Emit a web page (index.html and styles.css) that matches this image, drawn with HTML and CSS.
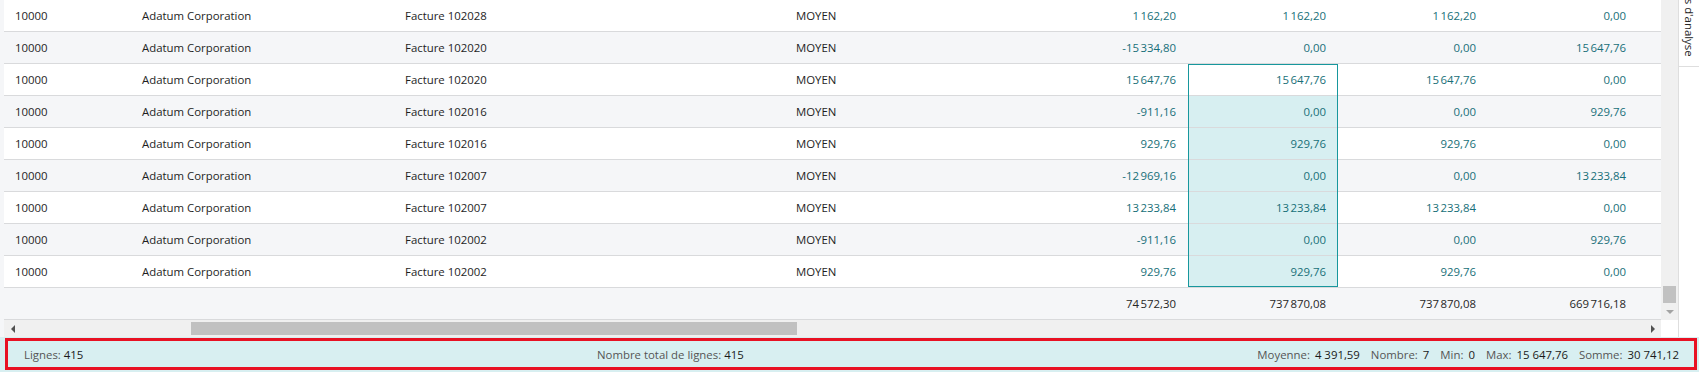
FILE: index.html
```html
<!DOCTYPE html>
<html lang="fr">
<head>
<meta charset="utf-8">
<title>Analyse</title>
<link rel="stylesheet" href="styles.css">
</head>
<body>
<div class="app">
  <div class="main">
    <div class="grid-area">
      <div class="grid-body">
        <div class="table">
          <div class="row">
            <div class="cell">10000</div><div class="cell">Adatum Corporation</div><div class="cell">Facture 102028</div><div class="cell">MOYEN</div>
            <div class="cell num">1&#8239;162,20</div><div class="cell num">1&#8239;162,20</div><div class="cell num">1&#8239;162,20</div><div class="cell num">0,00</div><div class="cell"></div>
          </div>
          <div class="row alt">
            <div class="cell">10000</div><div class="cell">Adatum Corporation</div><div class="cell">Facture 102020</div><div class="cell">MOYEN</div>
            <div class="cell num">-15&#8239;334,80</div><div class="cell num">0,00</div><div class="cell num">0,00</div><div class="cell num">15&#8239;647,76</div><div class="cell"></div>
          </div>
          <div class="row">
            <div class="cell">10000</div><div class="cell">Adatum Corporation</div><div class="cell">Facture 102020</div><div class="cell">MOYEN</div>
            <div class="cell num">15&#8239;647,76</div><div class="cell num sel sel-first focus">15&#8239;647,76</div><div class="cell num">15&#8239;647,76</div><div class="cell num">0,00</div><div class="cell"></div>
          </div>
          <div class="row alt">
            <div class="cell">10000</div><div class="cell">Adatum Corporation</div><div class="cell">Facture 102016</div><div class="cell">MOYEN</div>
            <div class="cell num">-911,16</div><div class="cell num sel">0,00</div><div class="cell num">0,00</div><div class="cell num">929,76</div><div class="cell"></div>
          </div>
          <div class="row">
            <div class="cell">10000</div><div class="cell">Adatum Corporation</div><div class="cell">Facture 102016</div><div class="cell">MOYEN</div>
            <div class="cell num">929,76</div><div class="cell num sel">929,76</div><div class="cell num">929,76</div><div class="cell num">0,00</div><div class="cell"></div>
          </div>
          <div class="row alt">
            <div class="cell">10000</div><div class="cell">Adatum Corporation</div><div class="cell">Facture 102007</div><div class="cell">MOYEN</div>
            <div class="cell num">-12&#8239;969,16</div><div class="cell num sel">0,00</div><div class="cell num">0,00</div><div class="cell num">13&#8239;233,84</div><div class="cell"></div>
          </div>
          <div class="row">
            <div class="cell">10000</div><div class="cell">Adatum Corporation</div><div class="cell">Facture 102007</div><div class="cell">MOYEN</div>
            <div class="cell num">13&#8239;233,84</div><div class="cell num sel">13&#8239;233,84</div><div class="cell num">13&#8239;233,84</div><div class="cell num">0,00</div><div class="cell"></div>
          </div>
          <div class="row alt">
            <div class="cell">10000</div><div class="cell">Adatum Corporation</div><div class="cell">Facture 102002</div><div class="cell">MOYEN</div>
            <div class="cell num">-911,16</div><div class="cell num sel">0,00</div><div class="cell num">0,00</div><div class="cell num">929,76</div><div class="cell"></div>
          </div>
          <div class="row">
            <div class="cell">10000</div><div class="cell">Adatum Corporation</div><div class="cell">Facture 102002</div><div class="cell">MOYEN</div>
            <div class="cell num">929,76</div><div class="cell num sel sel-last">929,76</div><div class="cell num">929,76</div><div class="cell num">0,00</div><div class="cell"></div>
          </div>
          <div class="row alt total">
            <div class="cell"></div><div class="cell"></div><div class="cell"></div><div class="cell"></div>
            <div class="cell num">74&#8239;572,30</div><div class="cell num">737&#8239;870,08</div><div class="cell num">737&#8239;870,08</div><div class="cell num">669&#8239;716,18</div><div class="cell"></div>
          </div>
        </div>
        <div class="vscroll">
          <div class="vthumb"></div>
          <div class="varrow"><span class="tri-down"></span></div>
        </div>
      </div>
      <div class="hbar">
        <div class="hscroll">
          <div class="harrow"><span class="tri-left"></span></div>
          <div class="htrack"><div class="hthumb"></div></div>
          <div class="harrow"><span class="tri-right"></span></div>
        </div>
        <div class="corner"></div>
      </div>
    </div>
    <div class="side">
      <div class="side-tab"><span class="side-label">Filtres d'analyse</span></div>
    </div>
  </div>
  <div class="status">
    <div class="st-item"><span class="lbl">Lignes:</span> <span class="val">415</span></div>
    <div class="st-item"><span class="lbl">Nombre total de lignes:</span> <span class="val">415</span></div>
    <div class="st-stats">
      <span class="lbl">Moyenne:</span><span class="val">4 391,59</span>
      <span class="lbl">Nombre:</span><span class="val">7</span>
      <span class="lbl">Min:</span><span class="val">0</span>
      <span class="lbl">Max:</span><span class="val">15 647,76</span>
      <span class="lbl">Somme:</span><span class="val">30 741,12</span>
    </div>
    <div class="highlight"></div>
  </div>
</div>
</body>
</html>
```

FILE: styles.css
```css
html, body {
  margin: 0;
  padding: 0;
}
body {
  width: 1699px;
  height: 372px;
  overflow: hidden;
  background: #f5f6f8;
  font-family: "Open Sans", "Segoe UI", "Noto Sans", sans-serif;
  font-size: 11.4px;
  color: #1e1e1e;
}
.app {
  display: flex;
  flex-direction: column;
  height: 372px;
}
.main {
  display: flex;
  height: 337px;
}
.grid-area {
  flex: 1;
  display: flex;
  flex-direction: column;
  padding-left: 4px;
}
.grid-body {
  display: flex;
  height: 320px;
}
.table {
  flex: 1;
  background: #fff;
}
.row {
  display: grid;
  grid-template-columns: 127px 263px 391px 253px 150px 150px 150px 150px 1fr;
  height: 32px;
  box-sizing: border-box;
  border-bottom: 1px solid #d9dadc;
  background: #fff;
}
.row.alt {
  background: #f5f6f8;
}
.cell {
  display: flex;
  align-items: center;
  padding-left: 11px;
  white-space: nowrap;
  position: relative;
}
.cell.num {
  justify-content: flex-end;
  padding: 0 12px 0 0;
  color: #176f78;
}
.total .cell.num {
  color: #262626;
}
.cell.sel {
  background: #d7eff1;
}
.cell.sel.focus {
  background: #fff;
}
.cell.sel::after {
  content: "";
  position: absolute;
  left: 0;
  right: 0;
  top: 0;
  bottom: -1px;
  border-left: 1px solid #17979d;
  border-right: 1px solid #17979d;
  pointer-events: none;
}
.cell.sel-first::after {
  border-top: 1px solid #17979d;
}
.cell.sel-last::after {
  bottom: 0;
  border-bottom: 1px solid #17979d;
}
.vscroll {
  width: 17px;
  background: #f0f0f0;
  display: flex;
  flex-direction: column;
  justify-content: flex-end;
  align-items: center;
}
.vthumb {
  width: 13px;
  height: 17px;
  background: #c1c1c1;
}
.varrow {
  height: 17px;
  width: 17px;
  display: flex;
  align-items: center;
  justify-content: center;
}
.tri-down {
  width: 0;
  height: 0;
  border-left: 4px solid transparent;
  border-right: 4px solid transparent;
  border-top: 4px solid #a3a3a3;
}
.hbar {
  display: flex;
  height: 17px;
}
.hscroll {
  flex: 1;
  display: flex;
  background: #f0f0f0;
}
.harrow {
  width: 17px;
  display: flex;
  align-items: center;
  justify-content: center;
}
.tri-left {
  width: 0;
  height: 0;
  border-top: 4px solid transparent;
  border-bottom: 4px solid transparent;
  border-right: 4px solid #505050;
}
.tri-right {
  width: 0;
  height: 0;
  border-top: 4px solid transparent;
  border-bottom: 4px solid transparent;
  border-left: 4px solid #505050;
}
.htrack {
  flex: 1;
  display: flex;
  align-items: center;
  padding-left: 170px;
}
.hthumb {
  width: 606px;
  height: 13px;
  background: #c1c1c1;
}
.corner {
  width: 17px;
  background: #fff;
}
.side {
  width: 20px;
  border-left: 1px solid #dedede;
  background: #fff;
}
.side-tab {
  height: 67px;
  box-sizing: border-box;
  border-bottom: 1px solid #dedede;
  display: flex;
  flex-direction: column;
  justify-content: flex-end;
  align-items: center;
  padding-bottom: 9px;
  overflow: hidden;
}
.side-label {
  writing-mode: vertical-rl;
  flex-shrink: 0;
  white-space: nowrap;
  font-size: 11.4px;
  color: #262626;
  line-height: 14px;
}
.status {
  position: relative;
  height: 35px;
  box-sizing: border-box;
  background: #d8eff1;
  display: grid;
  grid-template-columns: 573px 1fr auto;
  align-items: center;
  padding: 0 20px 0 24px;
}
.lbl {
  color: #555;
}
.val {
  color: #1a1a1a;
}
.st-stats .lbl {
  margin-left: 8px;
  margin-right: 5px;
}
.st-stats .lbl:first-child {
  margin-left: 0;
}
.highlight {
  position: absolute;
  left: 5px;
  top: 1px;
  width: 1692px;
  height: 32px;
  box-sizing: border-box;
  border: 3px solid #e81123;
  pointer-events: none;
}
```
